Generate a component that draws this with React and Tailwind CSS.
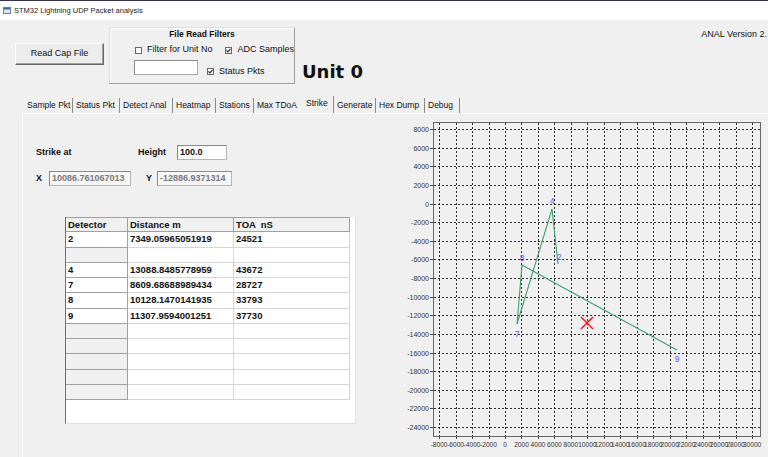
import React from 'react';

const tabs = [
  { label: 'Sample Pkt', w: 'w-[49px]' },
  { label: 'Status Pkt', w: 'w-[47px]' },
  { label: 'Detect Anal', w: 'w-[53px]' },
  { label: 'Heatmap', w: 'w-[43px]' },
  { label: 'Stations', w: 'w-[38px]' },
  { label: 'Max TDoA', w: 'w-[49px]', noSep: true },
  { label: 'Strike', w: 'w-[31px]', active: true },
  { label: 'Generate', w: 'w-[42px]' },
  { label: 'Hex Dump', w: 'w-[49px]' },
  { label: 'Debug', w: 'w-[35px]' },
];

const rows = [
  ['2', '7349.05965051919', '24521'],
  ['', '', '', true],
  ['4', '13088.8485778959', '43672'],
  ['7', '8609.68688989434', '28727'],
  ['8', '10128.1470141935', '33793'],
  ['9', '11307.9594001251', '37730'],
  ['', '', '', true],
  ['', '', '', true],
  ['', '', '', true],
  ['', '', '', true],
  ['', '', '', true],
];

function Check({ checked }) {
  return (
    <span className="flex h-[7px] w-[7px] shrink-0 items-center justify-center border border-[#666] bg-white">
      {checked && (
        <svg width="5" height="5" viewBox="0 0 5 5">
          <path d="M0.4 2.4 L1.9 3.9 L4.6 0.8" fill="none" stroke="#222" strokeWidth="1.1" />
        </svg>
      )}
    </span>
  );
}

// chart scales (page coordinates)
const px = (v) => 505 + v * 0.0082353;
const py = (v) => 129 + (8000 - v) * 0.0093125;
const xTicks = Array.from({ length: 20 }, (_, i) => -8000 + i * 2000);
const yTicks = Array.from({ length: 17 }, (_, i) => 8000 - i * 2000);

const pts = {
  4: [552, 209],
  2: [558, 264],
  7: [517, 324],
  8: [522, 265],
  9: [677, 350],
};
const segs = [
  [2, 4],
  [4, 7],
  [7, 8],
  [8, 9],
];

const labelFont = 'Liberation Sans, Arial, sans-serif';

function StrikeChart() {
  return (
    <svg width="388" height="343" viewBox="380 114 388 343" className="block">
      {xTicks.map((v) => {
        const x = Math.round(px(v)) + 0.5;
        return (
          <g key={'x' + v}>
            <line x1={x} y1={123} x2={x} y2={436} stroke="#1a1a1a" strokeWidth="0.9" strokeDasharray="2 2" shapeRendering="crispEdges" />
            <line x1={x} y1={436} x2={x} y2={439} stroke="#444" strokeWidth="1" shapeRendering="crispEdges" />
            <text x={px(v)} y={447} fontSize="6.6" fill="#333" textAnchor="middle" fontFamily={labelFont}>
              {v}
            </text>
          </g>
        );
      })}
      {yTicks.map((v) => {
        const y = Math.round(py(v)) + 0.5;
        return (
          <g key={'y' + v}>
            <line x1={434} y1={y} x2={760} y2={y} stroke="#1a1a1a" strokeWidth="0.9" strokeDasharray="2 2" shapeRendering="crispEdges" />
            <line x1={430} y1={y} x2={434} y2={y} stroke="#444" strokeWidth="1" shapeRendering="crispEdges" />
            <text x={429} y={y + 2.5} fontSize="7" fill="#333" textAnchor="end" fontFamily={labelFont}>
              {v}
            </text>
          </g>
        );
      })}
      <rect x="433.5" y="122.5" width="326.5" height="313.5" fill="none" stroke="#666" shapeRendering="crispEdges" />
      {segs.map(([a, b]) => (
        <line key={a + '-' + b} x1={pts[a][0]} y1={pts[a][1]} x2={pts[b][0]} y2={pts[b][1]} stroke="#3f9e72" strokeWidth="1.1" />
      ))}
      <text x="552" y="204" fontSize="8.5" fill="#5a5aff" textAnchor="middle" fontFamily={labelFont}>4</text>
      <text x="559" y="260" fontSize="8.5" fill="#5a5aff" textAnchor="middle" fontFamily={labelFont}>2</text>
      <text x="522" y="261" fontSize="8.5" fill="#5a5aff" textAnchor="middle" fontFamily={labelFont}>8</text>
      <text x="517" y="337" fontSize="8.5" fill="#5a5aff" textAnchor="middle" fontFamily={labelFont}>7</text>
      <text x="677" y="362" fontSize="8.5" fill="#5a5aff" textAnchor="middle" fontFamily={labelFont}>9</text>
      <path d="M581 317 L593 329 M593 317 L581 329" stroke="#ff1a1a" strokeWidth="1.6" />
    </svg>
  );
}

export default function App() {
  return (
    <div className="h-[457px] w-[768px] overflow-hidden bg-[#f0f0f0] font-['Liberation_Sans',Arial,sans-serif] text-black">
      {/* title bar */}
      <div className="flex h-[20px] items-center border-t border-[#34344a] bg-white pl-[3px]">
        <svg width="8" height="7" viewBox="0 0 8 7">
          <rect x="0.5" y="0.5" width="7" height="6" fill="#dfe6ee" stroke="#6d7f96" />
          <rect x="1" y="1" width="6" height="1.5" fill="#3a6ea8" />
        </svg>
        <span className="ml-[3px] whitespace-nowrap text-[7.5px] text-[#222]">STM32 Lightning UDP Packet analysis</span>
      </div>

      {/* top controls */}
      <div className="flex h-[76px] items-start">
        <button
          type="button"
          className="ml-[15px] mt-[23px] h-[22px] w-[89px] border border-b-[#6a6a6a] border-l-white border-r-[#6a6a6a] border-t-white bg-[#ececec] text-[9px] text-[#111] shadow-[inset_-1px_-1px_0_#a0a0a0]"
        >
          Read Cap File
        </button>
        <div className="ml-[5px] mt-[7px] h-[57px] w-[186px] border border-b-[#a0a0a0] border-l-[#dcdcdc] border-r-[#a0a0a0] border-t-[#dcdcdc] shadow-[inset_1px_1px_0_#fff]">
          <div className="h-[12px] text-center text-[8.5px] font-bold leading-[12px] text-[#111]">File Read Filters</div>
          <div className="mt-[5px] flex h-[10px] items-center">
            <div className="ml-[25px] flex w-[96px] items-center gap-[5px]">
              <Check />
              <span className="whitespace-nowrap text-[9px] text-[#111]">Filter for Unit No</span>
            </div>
            <div className="flex items-center gap-[5px]">
              <Check checked />
              <span className="whitespace-nowrap text-[9px] text-[#111]">ADC Samples</span>
            </div>
          </div>
          <div className="mt-[5px] flex items-start">
            <div className="ml-[24px] h-[15px] w-[64px] border border-[#a9a9a9] border-l-[#8a8a8a] border-t-[#8a8a8a] bg-white" />
            <div className="ml-[9px] mt-[5px] flex items-center gap-[5px]">
              <Check checked />
              <span className="whitespace-nowrap text-[9px] text-[#111]">Status Pkts</span>
            </div>
          </div>
        </div>
        <div className="ml-[7px] mt-[41px] whitespace-nowrap font-['DejaVu_Sans',sans-serif] text-[18px] font-bold leading-[22px] text-[#111]">
          Unit 0
        </div>
        <div className="ml-auto mr-[1px] mt-[8px] whitespace-nowrap text-[9px] text-[#111]">ANAL Version 2.</div>
      </div>

      {/* tabs */}
      <div className="ml-[24px] flex h-[17px] items-end">
        {tabs.map((t) => (
          <div
            key={t.label}
            className={`${t.w} flex items-center whitespace-nowrap pl-[3px] text-[8.5px] text-[#111] ${
              t.active ? 'h-[17px] pb-[3px]' : 'h-[15px]'
            } ${t.noSep ? '' : 'border-r border-[#8a8a8a]'}`}
          >
            {t.label}
          </div>
        ))}
      </div>

      {/* tab page */}
      <div className="ml-[22px] flex h-[344px] border-l border-t border-white">
        <div className="w-[357px]">
          <div className="ml-[13px] mt-[31px] flex h-[15px] items-center">
            <span className="w-[102px] text-[9px] font-bold text-[#111]">Strike at</span>
            <span className="w-[39px] text-[9px] font-bold text-[#111]">Height</span>
            <div className="flex h-[15px] w-[50px] items-center border border-[#b5b5b5] border-l-[#8a8a8a] border-t-[#8a8a8a] bg-white pl-[2px] text-[9px] font-bold text-[#111]">
              100.0
            </div>
          </div>
          <div className="ml-[13px] mt-[11px] flex h-[15px] items-center">
            <span className="w-[13px] text-[9px] font-bold text-[#111]">X</span>
            <div className="flex h-[15px] w-[82px] items-center overflow-hidden whitespace-nowrap border border-[#b5b5b5] border-l-[#8a8a8a] border-t-[#8a8a8a] bg-[#f6f6f6] pl-[2px] text-[9px] font-bold text-[#7a7a7a]">
              10086.761067013
            </div>
            <span className="ml-[15px] w-[11px] text-[9px] font-bold text-[#111]">Y</span>
            <div className="flex h-[15px] w-[75px] items-center overflow-hidden whitespace-nowrap border border-[#b5b5b5] border-l-[#8a8a8a] border-t-[#8a8a8a] bg-[#f6f6f6] pl-[2px] text-[9px] font-bold text-[#7a7a7a]">
              -12886.9371314
            </div>
          </div>

          {/* detector table */}
          <div className="ml-[42px] mt-[31px] h-[207px] w-[291px] border-b border-l border-r border-b-[#e2e2e2] border-l-[#6e6e6e] border-r-[#e2e2e2] bg-white">
            <div className="grid grid-cols-[62px_106px_116px]">
              {['Detector', 'Distance m', 'TOA  nS'].map((h) => (
                <div
                  key={h}
                  className="flex h-[15.25px] items-center whitespace-pre border-b border-r border-t border-[#a0a0a0] bg-[#f0f0f0] pl-[2px] text-[9.5px] font-bold text-[#111]"
                >
                  {h}
                </div>
              ))}
              {rows.map((r, ri) => (
                <React.Fragment key={ri}>
                  <div
                    className={`flex h-[15.25px] items-center border-b border-r border-[#a0a0a0] pl-[2px] text-[9.5px] font-bold text-[#111] ${
                      r[3] ? 'bg-[#f0f0f0]' : 'bg-white'
                    }`}
                  >
                    {r[0]}
                  </div>
                  <div className="flex h-[15.25px] items-center border-b border-r border-[#d6d6d6] pl-[2px] text-[9.5px] font-bold text-[#111]">
                    {r[1]}
                  </div>
                  <div className="flex h-[15.25px] items-center border-b border-r border-[#d6d6d6] pl-[2px] text-[9.5px] font-bold text-[#111]">
                    {r[2]}
                  </div>
                </React.Fragment>
              ))}
            </div>
          </div>
        </div>
        <StrikeChart />
      </div>
    </div>
  );
}
